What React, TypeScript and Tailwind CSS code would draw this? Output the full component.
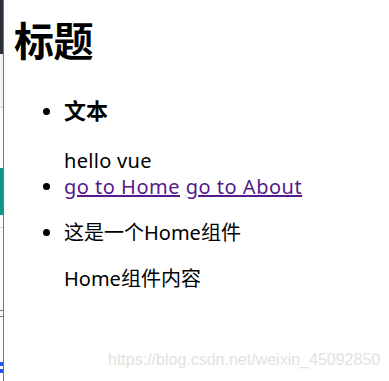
export default function App() {
  return (
    <div className="relative flex h-[381px] w-[389px] overflow-hidden bg-white text-black" style={{ fontFamily: '"Noto Sans", "Noto Sans CJK SC", sans-serif' }}>
      {/* sliver of neighbouring window on the left */}
      <div className="flex w-[3px] flex-col">
        <div className="h-[54px] bg-[#2b2f3a]" />
        <div className="h-[53px] bg-[#f3f3f3]" />
        <div className="h-px bg-[#d8d8d8]" />
        <div className="h-[60px] bg-[#fafafa]" />
        <div className="h-[47px] bg-[#10978a]" />
        <div className="h-[12px] bg-[#fafafa]" />
        <div className="h-px bg-[#d8d8d8]" />
        <div className="h-[82px] bg-[#fafafa]" />
        <div className="h-px bg-[#777]" />
        <div className="h-[5px] bg-[#fafafa]" />
        <div className="h-px bg-[#777]" />
        <div className="h-[45px] bg-[#fafafa]" />
        <div className="h-[4px] bg-[#2255ee]" />
        <div className="h-[3px] bg-white" />
        <div className="h-[4px] bg-[#2255ee]" />
        <div className="flex-1 bg-white" />
      </div>
      <div className="w-px bg-[#3b7fd6]" />

      <div className="flex-1 pl-[10px]">
        <h1 className="mt-[14px] text-[40px] font-bold leading-[54px] tracking-[-0.5px]">标题</h1>
        <ul className="mt-[29px] list-disc pl-[50px] text-[20px] leading-[26px]">
          <li>
            <h3 className="text-[22px] font-bold">文本</h3>
            <p className="mt-[25px] tracking-[0.3px]">hello vue</p>
          </li>
          <li className="tracking-[0.5px]">
            <a href="#" className="text-[#551a8b] underline">go to Home</a>{" "}
            <a href="#" className="text-[#551a8b] underline">go to About</a>
          </li>
          <li className="mt-[20px]">
            <p>这是一个Home组件</p>
            <p className="mt-[20px]">Home组件内容</p>
          </li>
        </ul>
      </div>

      <div className="absolute left-[108px] top-[348px] text-[16px] text-[#e2e2e2]" style={{ fontFamily: '"Liberation Sans", Arial, sans-serif' }}>
        https://blog.csdn.net/weixin_45092850
      </div>
    </div>
  );
}
